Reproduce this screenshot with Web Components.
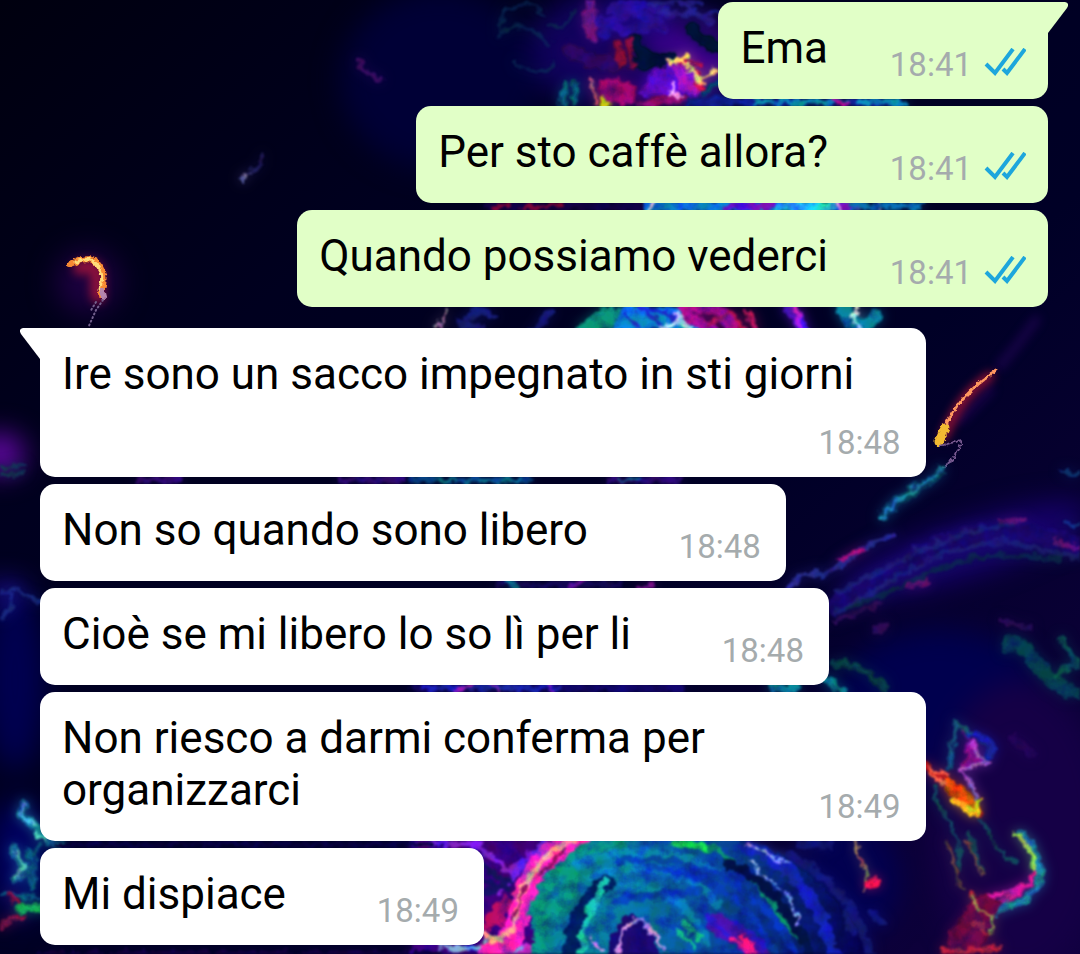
<!DOCTYPE html>
<html lang="it">
<head>
<meta charset="utf-8">
<meta name="viewport" content="width=device-width, initial-scale=1">
<title>Chat</title>
<style>
  body {
    margin: 0;
    background: #00001c;
    font-family: Roboto, "Noto Sans", sans-serif;
  }
</style>
</head>
<body>

<chat-screen>
  <chat-wallpaper slot="wallpaper"></chat-wallpaper>

  <message-group>
    <chat-message side="out" time="18:41" tail>Ema</chat-message>
    <chat-message side="out" time="18:41">Per sto caffè allora?</chat-message>
    <chat-message side="out" time="18:41">Quando possiamo vederci</chat-message>
  </message-group>

  <message-group>
    <chat-message side="in" time="18:48" tail>Ire sono un sacco impegnato in sti giorni</chat-message>
    <chat-message side="in" time="18:48">Non so quando sono libero</chat-message>
    <chat-message side="in" time="18:48">Cioè se mi libero lo so lì per li</chat-message>
    <chat-message side="in" time="18:49">Non riesco a darmi conferma per organizzarci</chat-message>
    <chat-message side="in" time="18:49">Mi dispiace</chat-message>
  </message-group>
</chat-screen>

<!-- Abstract neon paint on a night-blue ground -->
<template id="wallpaper">
  <style>
    :host { display: block; overflow: hidden; }
    svg { display: block; width: 100%; height: 100%; }
  </style>
  <svg viewBox="0 0 1080 954" preserveAspectRatio="xMidYMin slice" fill="none" stroke-linecap="round" aria-hidden="true">
    <defs>
      <linearGradient id="ground" x2="1" y2="1">
        <stop offset="0" stop-color="#00000f"/>
        <stop offset=".28" stop-color="#00001f"/>
        <stop offset=".6" stop-color="#000026"/>
        <stop offset="1" stop-color="#10003f"/>
      </linearGradient>
      <linearGradient id="swirl" x1="520" y1="0" x2="860" y2="0" gradientUnits="userSpaceOnUse">
        <stop offset="0" stop-color="#087d91"/>
        <stop offset=".3" stop-color="#0873b0"/>
        <stop offset=".6" stop-color="#083faa"/>
        <stop offset="1" stop-color="#050058"/>
      </linearGradient>
      <filter id="soft" x="-50%" y="-50%" width="200%" height="200%" color-interpolation-filters="sRGB">
        <feGaussianBlur stdDeviation="14"/>
      </filter>
      <!-- frayed edges, mottled colour and a faint glow round every stroke -->
      <filter id="rough" x="0" y="0" width="1080" height="954" filterUnits="userSpaceOnUse" color-interpolation-filters="sRGB">
        <feTurbulence type="fractalNoise" baseFrequency=".1" numOctaves="4" seed="8" result="noise"/>
        <feDisplacementMap in="SourceGraphic" in2="noise" scale="12" xChannelSelector="R" yChannelSelector="G"/>
        <feGaussianBlur stdDeviation="1.2" result="paint"/>
        <feTurbulence type="fractalNoise" baseFrequency=".06" numOctaves="4" seed="3"/>
        <feColorMatrix values="2 0 0 0 -.2  0 2 0 0 -.2  0 0 1 0 .2  0 0 0 0 1" result="mottle"/>
        <feComposite in="paint" in2="mottle" operator="arithmetic" k1=".6" k2=".5" result="mottled"/>
        <feGaussianBlur in="paint" stdDeviation="6"/>
        <feColorMatrix values="1 0 0 0 0  0 1 0 0 0  0 0 1 0 0  0 0 0 .6 0" result="glow"/>
        <feMerge><feMergeNode in="glow"/><feMergeNode in="mottled"/></feMerge>
      </filter>
      <!-- lighter touch for thin bright lines -->
      <filter id="spark" x="0" y="200" width="1080" height="300" filterUnits="userSpaceOnUse" color-interpolation-filters="sRGB">
        <feTurbulence type="fractalNoise" baseFrequency=".25" numOctaves="2" seed="5" result="noise"/>
        <feDisplacementMap in="SourceGraphic" in2="noise" scale="5" xChannelSelector="R" yChannelSelector="G"/>
        <feGaussianBlur stdDeviation=".7"/>
      </filter>
      <filter id="ember" x="0" y="200" width="1080" height="300" filterUnits="userSpaceOnUse" color-interpolation-filters="sRGB">
        <feGaussianBlur stdDeviation="5"/>
      </filter>
    </defs>

    <rect width="1080" height="954" fill="url(#ground)"/>

    <g filter="url(#soft)">
      <ellipse cx="440" cy="80" rx="100" ry="90" fill="#000036"/>
      <ellipse cx="610" cy="50" rx="80" ry="60" fill="#10005c"/>
      <ellipse cx="690" cy="60" rx="50" ry="40" fill="#3a008c"/>
      <ellipse cx="940" cy="710" rx="110" ry="80" fill="#00004e"/>
      <ellipse cx="1020" cy="830" rx="90" ry="150" fill="#150046"/>
      <ellipse cx="15" cy="680" rx="30" ry="90" fill="#000050"/>
      <ellipse cx="20" cy="860" rx="30" ry="60" fill="#000060"/>
      <ellipse cx="0" cy="454" rx="24" ry="20" fill="#6508a8"/>
      <ellipse cx="5" cy="592" rx="20" ry="8" fill="#2710b8"/>
      <ellipse cx="88" cy="282" rx="32" ry="32" fill="#1c0040"/>
      <ellipse cx="965" cy="550" rx="130" ry="26" transform="rotate(-18 965 550)" fill="#17006c"/>
      <ellipse cx="850" cy="880" rx="50" ry="60" fill="#020050"/>
    </g>

    <!-- top cloud -->
    <g filter="url(#rough)">
      <path d="M500 32C495 4 536-6 542 14M500 36C506 26 530 20 550 44M516 62C530 78 552 72 556 62M550 26C562 30 570 24 574 8" stroke="#0b3a6a" stroke-width="4" opacity=".5"/>
      <path d="M588 0V34M594 4V40" stroke="#68138c" stroke-width="7"/>
      <path d="M604 36C612 10 640 6 664 30M612 10C626 2 650 4 672 16M600 22C620 30 630 34 660 22" stroke="#3010b8" stroke-width="9" opacity=".8"/>
      <path d="M650 4L700 2M660 12L720 14M678 0L710 22" stroke="#2b25a5" stroke-width="5" opacity=".7"/>
      <path d="M636 40C640 54 650 60 668 58M690 30L716 48M632 64L665 62" stroke="#00113a" stroke-width="12"/>
      <path d="M570 50C580 60 600 66 628 62" stroke="#2a0668" stroke-width="16"/>
      <path d="M618 44L622 66M628 40L632 66" stroke="#7d0b43" stroke-width="6"/>
      <path d="M566 84L562 104M576 84L574 104" stroke="#075e80" stroke-width="7"/>
      <path d="M598 80C616 76 640 78 638 104H600Z" fill="#98067a"/>
      <path d="M590 80C594 94 598 98 596 106M606 96L604 106" stroke="#dc5c80" stroke-width="3"/>
      <path d="M604 98V106" stroke="#d5b613" stroke-width="7"/>
      <path d="M640 96C644 74 662 64 680 60L700 96Z" fill="#5f0ae0"/>
      <path d="M672 66L680 92L698 96L700 80L682 64Z" fill="#b012da"/>
      <path d="M642 104L676 98L718 104" stroke="#880a78" stroke-width="6"/>
      <path d="M694 70L702 90M682 62L700 64" stroke="#c91261" stroke-width="6"/>
      <path d="M668 61L688 57M670 64L684 60L694 70L690 72L702 82M700 78L716 70" stroke="#ffc97c" stroke-width="3"/>
      <path d="M670 84L674 96L682 98" stroke="#e9abf9" stroke-width="3"/>
      <path d="M704 92L718 82M704 102H760" stroke="#063f8e" stroke-width="8"/>
      <path d="M690 102H900" stroke="#101d99" stroke-width="9"/>
      <path d="M756 102H846M858 102H904" stroke="#0883bd" stroke-width="6"/>
      <path d="M835 101L846 104" stroke="#a510ac" stroke-width="5"/>
      <path d="M360 60L362 70L380 80" stroke="#47107c" stroke-width="5" opacity=".7"/>
      <path d="M248 172L262 166V154" stroke="#26256f" stroke-width="4" opacity=".7"/>
      <path d="M242 180L245 173" stroke="#8575c8" stroke-width="4" opacity=".8"/>
    </g>

    <!-- strips of paint that show between the bubbles -->
    <g filter="url(#rough)">
      <path d="M492 206H650" stroke="#100047" stroke-width="10"/>
      <path d="M494 208L510 204M522 208L560 204" stroke="#72053c" stroke-width="4"/>
      <path d="M648 206H850" stroke="#0878e0" stroke-width="12"/>
      <path d="M728 206H770M838 206H860" stroke="#7210ca" stroke-width="8"/>
      <path d="M780 206H832" stroke="#22ccfa" stroke-width="12"/>
      <path d="M648 212L654 202M838 200L842 212M880 202V212" stroke="#d8eafa" stroke-width="3"/>
      <path d="M854 206H920" stroke="#0765b4" stroke-width="7"/>

      <path d="M446 308C442 314 444 322 436 330" stroke="#8b7194" stroke-width="3"/>
      <path d="M464 330C464 308 484 308 492 316M460 322L482 328M532 330L552 312" stroke="#1b239b" stroke-width="7" opacity=".7"/>
      <path d="M575 330C586 314 600 306 624 308L612 330Z" fill="#098a85"/>
      <path d="M612 330L624 306H684L700 330Z" fill="#0a80e0"/>
      <path d="M640 308L664 328M650 308L690 326M626 316L640 328" stroke="#1e2bd1" stroke-width="4"/>
      <path d="M684 308C704 306 728 308 734 330M686 316L714 330" stroke="#a80b9a" stroke-width="11"/>
      <path d="M710 324L730 312L746 330M746 310L756 330" stroke="#af1364" stroke-width="4"/>
      <path d="M662 330L676 320L690 328M674 314L688 326" stroke="#acdcff" stroke-width="4"/>
      <path d="M790 306L804 330" stroke="#5813e1" stroke-width="12"/>
      <path d="M795 308L802 328" stroke="#b81dec" stroke-width="5"/>
      <path d="M842 306C850 322 862 334 876 316" stroke="#087aa8" stroke-width="14"/>
      <path d="M857 308L854 320L862 330" stroke="#cae4ff" stroke-width="3"/>

      <path d="M140 480H180M340 480H400M610 480H680" stroke="#2b0979" stroke-width="7"/>
      <path d="M410 480H530" stroke="#063a7b" stroke-width="6"/>
      <path d="M440 480H520M620 480L640 478" stroke="#0b6a9a" stroke-width="3"/>
      <path d="M500 584H620" stroke="#12085c" stroke-width="7"/>
      <path d="M508 582L516 588" stroke="#0c658c" stroke-width="6"/>
      <path d="M568 588L584 581M638 588L654 584" stroke="#761097" stroke-width="5"/>
      <path d="M414 688H680" stroke="#10056c" stroke-width="8"/>
      <path d="M424 688H560" stroke="#1824b7" stroke-width="5"/>
      <path d="M490 684L500 692M456 690L470 686M545 684L553 692" stroke="#9b22cf" stroke-width="3"/>
      <path d="M774 688H796M824 678L844 692" stroke="#087f94" stroke-width="8"/>
    </g>

    <!-- left edge -->
    <g filter="url(#rough)">
      <path d="M0 467L28 466M0 475L22 473" stroke="#13436a" stroke-width="4" opacity=".7"/>
      <path d="M0 592L18 590L40 602M0 618C12 616 14 600 8 592" stroke="#2039a5" stroke-width="4" opacity=".6"/>
      <path d="M24 804L22 814L34 826C40 834 48 842 62 844" stroke="#0f729f" stroke-width="9"/>
      <path d="M24 804L22 814L32 824M38 834L46 840" stroke="#4cc1d8" stroke-width="4"/>
      <path d="M14 848C14 860 26 860 22 874L16 878" stroke="#1460a5" stroke-width="9"/>
      <path d="M16 850L23 866L18 876" stroke="#49b1d0" stroke-width="4"/>
      <path d="M38 846C30 856 40 866 32 890M0 894C16 890 20 900 40 898M30 850V884" stroke="#095b92" stroke-width="4"/>
      <path d="M8 894L20 904M0 928C8 918 16 914 22 920" stroke="#851250" stroke-width="5"/>
      <path d="M22 910C30 900 36 914 42 908" stroke="#15a068" stroke-width="9"/>
    </g>
    <path d="M80 268C90 264 96 266 97 274C98 282 96 290 98 296" stroke="#8e103c" stroke-width="14" filter="url(#ember)"/>
    <path d="M70 264C80 260 90 256 97 263C106 273 104 284 101 294" stroke="#f78a33" stroke-width="6" filter="url(#spark)"/>
    <path d="M76 262C88 257 94 259 99 268C104 276 101 284 99 290" stroke="#ffdc7a" stroke-width="3" filter="url(#spark)"/>
    <path d="M102 290L104 298" stroke="#b486ae" stroke-width="4" filter="url(#spark)"/>
    <path d="M103 300L96 310L88 328M96 302L90 312" stroke="#74618e" stroke-width="2" stroke-dasharray="1 3"/>

    <!-- comet on the right -->
    <path d="M1036 320L1018 344L1000 366M990 390L960 420" stroke="#34076f" stroke-width="10" opacity=".4" filter="url(#ember)"/>
    <path d="M990 376C970 390 958 404 944 436" stroke="#a81238" stroke-width="8" filter="url(#ember)"/>
    <path d="M996 370C972 388 954 404 943 432" stroke="#ff9860" stroke-width="3" filter="url(#spark)"/>
    <path d="M945 428L939 442" stroke="#f2ba32" stroke-width="9" filter="url(#spark)"/>
    <path d="M940 446L962 440C958 456 950 462 940 470" stroke="#795a91" stroke-width="2" stroke-dasharray="2 2" filter="url(#spark)"/>
    <g filter="url(#rough)">
      <path d="M938 472C930 486 900 494 882 516" stroke="#083f70" stroke-width="10"/>
      <path d="M942 466C932 482 898 496 880 518" stroke="#1a80b8" stroke-width="4"/>
      <path d="M890 536C862 546 844 562 828 574H804L786 588" stroke="#2c2ba6" stroke-width="6" opacity=".9"/>
      <path d="M862 550L840 560" stroke="#a00f87" stroke-width="5"/>
      <path d="M836 606C890 580 930 532 1010 530C1044 530 1060 546 1084 546" stroke="#1c087f" stroke-width="18" opacity=".8"/>
      <path d="M836 612C884 588 926 548 1000 542C1030 542 1060 560 1084 556M836 594C900 562 940 534 1010 524" stroke="#233095" stroke-width="6" opacity=".5"/>
      <path d="M850 606C910 590 930 562 1000 554L1060 560" stroke="#0a3058" stroke-width="6" opacity=".6"/>
      <path d="M1000 521L1024 520M1056 542L1084 548M910 586L926 582" stroke="#6a1486" stroke-width="6" opacity=".8"/>
      <path d="M1060 472H1084M1064 524H1084" stroke="#123f9b" stroke-width="4" opacity=".7"/>
      <path d="M836 620L882 604M876 632L886 626M1000 620L1030 628" stroke="#391067" stroke-width="5" opacity=".7"/>
      <path d="M836 664C860 664 880 680 884 690" stroke="#073b51" stroke-width="8"/>
      <path d="M1010 644C1036 644 1040 690 1084 694" stroke="#064762" stroke-width="15" opacity=".8"/>
      <path d="M1060 638L1082 668M1056 674L1084 660" stroke="#0a5968" stroke-width="6" opacity=".8"/>
    </g>

    <!-- flame and hook, lower right -->
    <g filter="url(#rough)">
      <path d="M956 722L986 762L962 770L970 738Z" fill="#830ca1"/>
      <path d="M948 768L956 724L978 738L994 750" stroke="#154c87" stroke-width="5"/>
      <path d="M974 734C990 738 996 748 990 756" stroke="#1721bc" stroke-width="9"/>
      <path d="M972 744L986 764L960 770L972 784L978 806" stroke="#a757cb" stroke-width="4"/>
      <path d="M1012 738L1034 756" stroke="#2d066d" stroke-width="8" opacity=".6"/>
      <path d="M926 766C946 786 958 784 978 812" stroke="#a91928" stroke-width="9"/>
      <path d="M950 786L972 806" stroke="#f8560a" stroke-width="14"/>
      <path d="M952 798L976 814L980 802" stroke="#f8c020" stroke-width="5"/>
      <path d="M930 768L950 776M930 774L944 784" stroke="#fb6760" stroke-width="3"/>
      <path d="M934 786C938 828 960 812 960 868M980 820C1000 840 990 850 1016 862M968 832L982 872" stroke="#14506b" stroke-width="4" opacity=".8"/>
      <path d="M946 842C960 860 950 870 962 888M968 842L982 874" stroke="#67404c" stroke-width="3"/>
      <path d="M1020 834C1034 846 1044 870 1036 888C1026 908 1006 900 992 914" stroke="#1a80b0" stroke-width="8"/>
      <path d="M1016 834C1030 844 1036 862 1034 874" stroke="#8cd05c" stroke-width="5"/>
      <path d="M1034 870C1034 894 1006 888 984 900M1020 892L990 908" stroke="#c81ba8" stroke-width="5"/>
      <path d="M948 932L980 892L1000 904L982 948L946 952Z" fill="#6a084c"/>
      <path d="M972 892L980 912M974 920L986 932M942 952L1000 948" stroke="#ab2049" stroke-width="5"/>
      <path d="M974 896L978 910L992 916L990 934" stroke="#928f55" stroke-width="3"/>
      <path d="M856 842L858 856L866 866V890" stroke="#94716b" stroke-width="3"/>
      <path d="M868 884L876 880" stroke="#e4165c" stroke-width="8"/>
    </g>

    <!-- big swirl at the bottom -->
    <g filter="url(#rough)">
      <path d="M410 838H590V960H410Z" fill="#390088"/>
      <path d="M410 844H480M480 848L510 872L544 842M500 892L524 862" stroke="#7720e0" stroke-width="6"/>
      <path d="M484 866L500 878M484 894L510 880M484 880L508 890" stroke="#14126c" stroke-width="6"/>
      <path d="M486 928L506 902L516 920M488 916L502 924" stroke="#ad0c73" stroke-width="9"/>
      <path d="M480 960V944H560V960Z" fill="#b32bd2"/>
      <path d="M440 948H520M486 942L500 952" stroke="#77a1ed" stroke-width="5"/>
      <path d="M584 836C544 846 526 880 522 906C516 930 512 944 490 954" stroke="#f824c8" stroke-width="23"/>
      <path d="M576 838C546 852 530 872 520 896C514 914 516 928 502 940L484 936" stroke="#ffa0a8" stroke-width="6"/>
      <path d="M566 848L540 876M524 888L512 920" stroke="#851367" stroke-width="3"/>
      <path d="M536 960C522 910 540 854 612 836H730C786 846 838 890 878 960Z" fill="url(#swirl)"/>
      <path d="M534 912C550 870 578 846 618 842M540 950C530 914 572 906 572 874" stroke="#089090" stroke-width="13"/>
      <path d="M578 866C600 846 670 848 716 872M590 878C640 858 680 864 718 904M604 892C646 878 690 894 706 944" stroke="#0a8cd6" stroke-width="9" opacity=".6"/>
      <path d="M618 862C690 850 764 884 796 954M650 868C716 872 756 910 774 954M616 900L700 890" stroke="#0838c6" stroke-width="7" opacity=".8"/>
      <path d="M672 842L720 850L760 888L796 936" stroke="#098a70" stroke-width="6"/>
      <path d="M674 841L704 846" stroke="#16d657" stroke-width="6"/>
      <path d="M570 954C572 916 590 898 606 882" stroke="#002066" stroke-width="16"/>
      <path d="M582 950C580 926 596 900 606 880" stroke="#19b8b4" stroke-width="7"/>
      <path d="M606 960C612 910 646 892 660 960" fill="#1c0980"/>
      <path d="M618 954C620 932 630 916 642 920L664 948M592 940L602 950" stroke="#c690f8" stroke-width="3"/>
      <path d="M680 932L694 948M684 922L700 940" stroke="#10ad92" stroke-width="5" stroke-dasharray="4 5"/>
      <path d="M716 924L758 950" stroke="#5409ba" stroke-width="20" opacity=".8"/>
      <path d="M706 916L730 936M736 924L764 944" stroke="#2b18c8" stroke-width="5"/>
      <path d="M732 940L756 954M742 936L750 946" stroke="#f01795" stroke-width="6"/>
      <path d="M730 864C764 880 796 914 812 960" stroke="#02124c" stroke-width="10"/>
      <path d="M746 846C790 860 820 900 836 960" stroke="#1424c4" stroke-width="12" opacity=".9"/>
      <path d="M746 844L788 864M750 862L766 878L790 898L800 924" stroke="#8fa3fe" stroke-width="3" stroke-dasharray="5 4"/>
      <path d="M800 844H830M790 856C830 876 860 910 870 954M846 914L852 932M872 912L880 922" stroke="#161c8c" stroke-width="9" opacity=".8"/>
      <path d="M60 844H390M390 844H430" stroke="#07004a" stroke-width="5"/>
      <path d="M40 954H440" stroke="#120048" stroke-width="6"/>
    </g>
  </svg>
</template>

<template id="message">
  <style>
    :host {
      --fill: #fff;
      --reserve: 173px;
      display: grid;
      position: relative;
      box-sizing: border-box;
      max-width: 82vw;
      padding: 20px 25px 15px 22px;
      border-radius: 15px;
      background: var(--fill);
      color: #000;
    }
    :host([side="in"]) { align-self: flex-start; }
    :host([side="out"]) {
      --fill: #e1ffc7;
      --reserve: 198px;
      align-self: flex-end;
      padding-right: 22px;
    }
    :host([side="in"][tail]) { border-top-left-radius: 0; }
    :host([side="out"][tail]) { border-top-right-radius: 0; }

    /* text and meta share one cell; the spacer keeps the last line clear of the time */
    p, .meta { grid-area: 1 / 1; }
    p {
      margin: 0 0 10px;
      font-size: 44px;
      line-height: 52px;
    }
    p::after {
      content: "";
      display: inline-block;
      width: var(--reserve);
    }
    .meta {
      place-self: end;
      display: flex;
      align-items: center;
      gap: 12px;
      color: #a5abad;
      font-size: 33px;
      line-height: 39px;
    }
    .ticks { display: none; width: 42px; height: 34px; }
    :host([side="out"]) .ticks { display: block; }

    .tail {
      display: none;
      position: absolute;
      top: 0;
      width: 21px;
      height: 32px;
      fill: var(--fill);
    }
    :host([tail]) .tail { display: block; }
    :host([side="out"]) .tail { left: 100%; margin-left: -1px; }
    :host([side="in"]) .tail { right: 100%; margin-right: -1px; transform: scaleX(-1); }
  </style>
  <svg class="tail" viewBox="0 0 21 32" aria-hidden="true"><path d="M0 0H18Q23 1 20 6L1 31H0Z"/></svg>
  <p><slot></slot></p>
  <span class="meta">
    <time></time>
    <svg class="ticks" viewBox="0 0 42 34" fill="none" stroke="#1da6dc" stroke-width="4" role="img" aria-label="Letto">
      <path d="M2 16L11 25L29 1M19 21L23 25L41 1"/>
    </svg>
  </span>
</template>

<script>
  class ChatWallpaper extends HTMLElement {
    constructor() {
      super();
      this.attachShadow({ mode: "open" })
        .append(document.getElementById("wallpaper").content.cloneNode(true));
    }
  }

  class ChatMessage extends HTMLElement {
    constructor() {
      super();
      this.attachShadow({ mode: "open" })
        .append(document.getElementById("message").content.cloneNode(true));
    }

    connectedCallback() {
      this.shadowRoot.querySelector("time").textContent = this.getAttribute("time") ?? "";
    }
  }

  class MessageGroup extends HTMLElement {
    constructor() {
      super();
      this.attachShadow({ mode: "open" }).innerHTML = `
        <style>
          :host { display: flex; flex-direction: column; gap: 7px; }
        </style>
        <slot></slot>
      `;
    }
  }

  class ChatScreen extends HTMLElement {
    constructor() {
      super();
      this.attachShadow({ mode: "open" }).innerHTML = `
        <style>
          :host { display: grid; min-height: 100vh; overflow: hidden; }
          ::slotted([slot="wallpaper"]) { position: fixed; inset: 0; }
          main {
            position: relative;
            display: flex;
            flex-direction: column;
            gap: 21px;
            padding: 2px 32px 9px 40px;
          }
        </style>
        <slot name="wallpaper"></slot>
        <main><slot></slot></main>
      `;
    }
  }

  customElements.define("chat-wallpaper", ChatWallpaper);
  customElements.define("chat-message", ChatMessage);
  customElements.define("message-group", MessageGroup);
  customElements.define("chat-screen", ChatScreen);
</script>
</body>
</html>
